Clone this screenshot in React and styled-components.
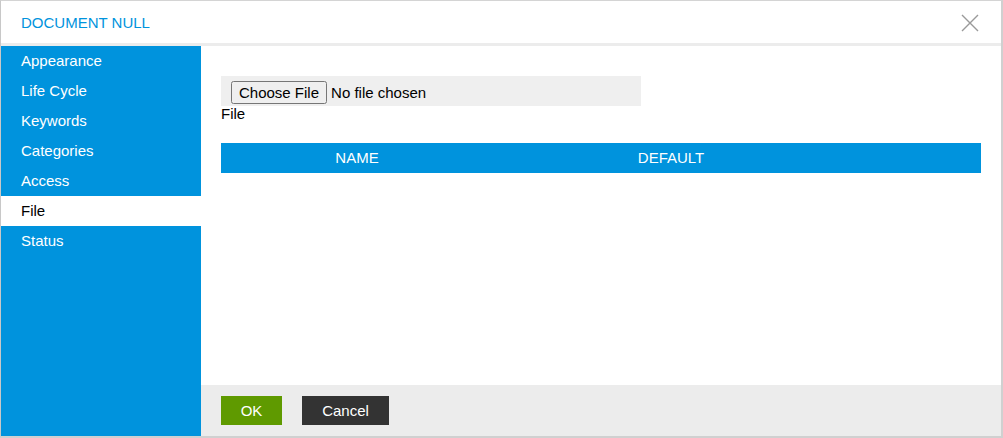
import React from "react";
import styled, { createGlobalStyle } from "styled-components";

const GlobalStyle = createGlobalStyle`
  html, body {
    margin: 0;
    padding: 0;
    background: #ffffff;
  }
  body {
    font-family: "Liberation Sans", Arial, sans-serif;
    font-size: 15px;
  }
`;

const menu = ["Appearance", "Life Cycle", "Keywords", "Categories", "Access", "File", "Status"];

function App() {
  return (
    <>
      <GlobalStyle />
      <Dialog>
        <Header>
          <Title>DOCUMENT NULL</Title>
          <CloseButton aria-label="close">
            <svg width="18" height="18" viewBox="0 0 18 18">
              <path d="M1 1 L17 17 M17 1 L1 17" stroke="#9a9a9a" strokeWidth="1.4" fill="none" />
            </svg>
          </CloseButton>
        </Header>
        <Body>
          <Sidebar>
            {menu.map((item) => (
              <MenuItem key={item} $active={item === "File"}>
                {item}
              </MenuItem>
            ))}
          </Sidebar>
          <Main>
            <Content>
              <FileBox>
                <input type="file" />
              </FileBox>
              <FieldLabel>File</FieldLabel>
              <TableHead>
                <HeadCell>NAME</HeadCell>
                <HeadCell>DEFAULT</HeadCell>
                <HeadCell />
              </TableHead>
            </Content>
            <Footer>
              <Button $width={61} $bg="#5f9a00">OK</Button>
              <Button $width={87} $bg="#333333">Cancel</Button>
            </Footer>
          </Main>
        </Body>
      </Dialog>
    </>
  );
}
export default App;

const Dialog = styled.div`
  box-sizing: border-box;
  width: 1003px;
  height: 438px;
  display: flex;
  flex-direction: column;
  border-top: 1px solid #d4d4d4;
  border-left: 1px solid #c8c8c8;
  border-right: 2px solid #d0d0d0;
  border-bottom: 2px solid #d0d0d0;
  background: #fff;
`;

const Header = styled.div`
  height: 42px;
  flex-shrink: 0;
  display: flex;
  align-items: center;
  justify-content: space-between;
  padding: 0 22px 0 20px;
  border-bottom: 3px solid #ececec;
`;

const Title = styled.div`
  color: #0093dd;
  font-size: 15px;
`;

const CloseButton = styled.div`
  display: flex;
  align-items: center;
  cursor: pointer;
  margin-top: 1px;
`;

const Body = styled.div`
  flex: 1;
  display: flex;
  min-height: 0;
`;

const Sidebar = styled.div`
  width: 200px;
  flex-shrink: 0;
  background: #0093dd;
`;

const MenuItem = styled.div`
  height: 30px;
  line-height: 30px;
  padding-left: 20px;
  font-size: 15px;
  color: ${(p) => (p.$active ? "#000" : "#fff")};
  background: ${(p) => (p.$active ? "#fff" : "transparent")};
  cursor: pointer;
`;

const Main = styled.div`
  flex: 1;
  display: flex;
  flex-direction: column;
`;

const Content = styled.div`
  flex: 1;
  padding: 30px 20px 0 20px;
`;

const FileBox = styled.div`
  width: 420px;
  height: 30px;
  box-sizing: border-box;
  background: #efefef;
  display: flex;
  align-items: center;
  padding: 2px 0 0 10px;

  > input {
    font-family: "Liberation Sans", Arial, sans-serif;
    font-size: 15px;
    color: #000;
  }
`;

const FieldLabel = styled.div`
  font-size: 15px;
  color: #000;
  line-height: 17px;
  margin-top: -1px;
`;

const TableHead = styled.div`
  margin-top: 21px;
  height: 30px;
  display: grid;
  grid-template-columns: 272px 356px 1fr;
  background: #0093dd;
`;

const HeadCell = styled.div`
  color: #fff;
  font-size: 15px;
  line-height: 30px;
  text-align: center;
`;

const Footer = styled.div`
  height: 51px;
  flex-shrink: 0;
  box-sizing: border-box;
  background: #ececec;
  display: flex;
  align-items: center;
  gap: 20px;
  padding: 0 20px;
`;

const Button = styled.div`
  width: ${(p) => p.$width}px;
  height: 29px;
  line-height: 29px;
  text-align: center;
  font-size: 15px;
  color: #fff;
  background: ${(p) => p.$bg};
  cursor: pointer;
`;
